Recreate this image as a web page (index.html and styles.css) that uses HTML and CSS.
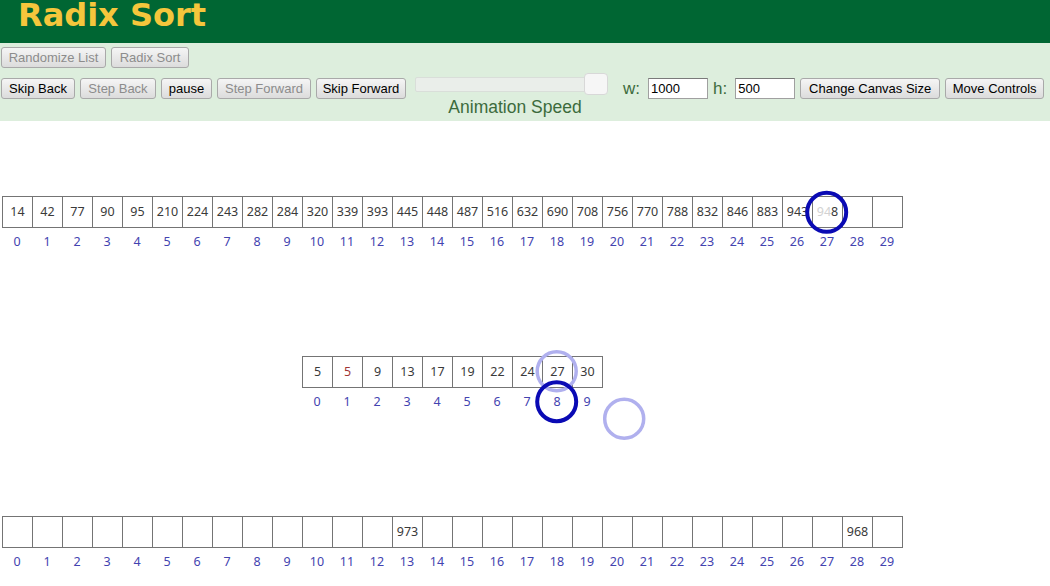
FILE: index.html
```html
<!DOCTYPE html>
<html>
<head>
<meta charset="utf-8">
<title>Radix Sort</title>
<link rel="stylesheet" href="styles.css">
</head>
<body>
<header class="header"><h1 class="title">Radix Sort</h1></header>
<div class="controls">
  <div class="row row1">
    <button class="btn off w-rand">Randomize List</button>
    <button class="btn off w-radix">Radix Sort</button>
  </div>
  <div class="row row2">
    <button class="btn w-skipb">Skip Back</button>
    <button class="btn off w-stepb">Step Back</button>
    <button class="btn w-pause">pause</button>
    <button class="btn off w-stepf">Step Forward</button>
    <button class="btn w-skipf">Skip Forward</button>
    <div class="speed">
      <div class="track"><span class="thumb"></span></div>
      <div class="speed-label">Animation Speed</div>
    </div>
    <span class="lbl lbl-w">w:</span>
    <input class="num" type="text" value="1000">
    <span class="lbl">h:</span>
    <input class="num" type="text" value="500">
    <button class="btn w-canvas">Change Canvas Size</button>
    <button class="btn w-move">Move Controls</button>
  </div>
</div>
<div class="canvas">
  <div class="arr arr-top">
    <div class="cells">
      <div class="cell">14</div><div class="cell">42</div><div class="cell">77</div><div class="cell">90</div><div class="cell">95</div>
      <div class="cell">210</div><div class="cell">224</div><div class="cell">243</div><div class="cell">282</div><div class="cell">284</div>
      <div class="cell">320</div><div class="cell">339</div><div class="cell">393</div><div class="cell">445</div><div class="cell">448</div>
      <div class="cell">487</div><div class="cell">516</div><div class="cell">632</div><div class="cell">690</div><div class="cell">708</div>
      <div class="cell">756</div><div class="cell">770</div><div class="cell">788</div><div class="cell">832</div><div class="cell">846</div>
      <div class="cell">883</div><div class="cell">943</div><div class="cell"><span class="faded">94</span>8</div><div class="cell"></div><div class="cell"></div>
    </div>
    <div class="idx">
      <span>0</span><span>1</span><span>2</span><span>3</span><span>4</span><span>5</span><span>6</span><span>7</span><span>8</span><span>9</span>
      <span>10</span><span>11</span><span>12</span><span>13</span><span>14</span><span>15</span><span>16</span><span>17</span><span>18</span><span>19</span>
      <span>20</span><span>21</span><span>22</span><span>23</span><span>24</span><span>25</span><span>26</span><span>27</span><span>28</span><span>29</span>
    </div>
  </div>
  <div class="arr arr-mid">
    <div class="cells">
      <div class="cell">5</div><div class="cell red">5</div><div class="cell">9</div><div class="cell">13</div><div class="cell">17</div>
      <div class="cell">19</div><div class="cell">22</div><div class="cell">24</div><div class="cell">27</div><div class="cell">30</div>
    </div>
    <div class="idx">
      <span>0</span><span>1</span><span>2</span><span>3</span><span>4</span><span>5</span><span>6</span><span>7</span><span>8</span><span>9</span>
    </div>
  </div>
  <div class="arr arr-bot">
    <div class="cells">
      <div class="cell"></div><div class="cell"></div><div class="cell"></div><div class="cell"></div><div class="cell"></div>
      <div class="cell"></div><div class="cell"></div><div class="cell"></div><div class="cell"></div><div class="cell"></div>
      <div class="cell"></div><div class="cell"></div><div class="cell"></div><div class="cell">973</div><div class="cell"></div>
      <div class="cell"></div><div class="cell"></div><div class="cell"></div><div class="cell"></div><div class="cell"></div>
      <div class="cell"></div><div class="cell"></div><div class="cell"></div><div class="cell"></div><div class="cell"></div>
      <div class="cell"></div><div class="cell"></div><div class="cell"></div><div class="cell">968</div><div class="cell"></div>
    </div>
    <div class="idx">
      <span>0</span><span>1</span><span>2</span><span>3</span><span>4</span><span>5</span><span>6</span><span>7</span><span>8</span><span>9</span>
      <span>10</span><span>11</span><span>12</span><span>13</span><span>14</span><span>15</span><span>16</span><span>17</span><span>18</span><span>19</span>
      <span>20</span><span>21</span><span>22</span><span>23</span><span>24</span><span>25</span><span>26</span><span>27</span><span>28</span><span>29</span>
    </div>
  </div>
  <svg class="overlay" width="1050" height="465" viewBox="0 0 1050 465">
    <circle cx="556.7" cy="250.3" r="19.5" fill="none" stroke="#b0b0ee" stroke-width="3.5"/>
    <circle cx="624.2" cy="297.8" r="19.5" fill="none" stroke="#b0b0ee" stroke-width="3.5"/>
    <circle cx="826.7" cy="91.3" r="19.5" fill="none" stroke="#0a0ab4" stroke-width="4"/>
    <circle cx="556.7" cy="280.7" r="19.5" fill="none" stroke="#0a0ab4" stroke-width="4"/>
  </svg>
</div>
</body>
</html>
```
FILE: styles.css
```css
html, body {
  margin: 0;
  padding: 0;
  background: #ffffff;
  font-family: "Liberation Sans", Arial, sans-serif;
}

.header {
  height: 43px;
  background: #006633;
}

.title {
  margin: 0 0 0 18px;
  padding-top: 2px;
  font-family: "DejaVu Sans", Verdana, sans-serif;
  font-weight: bold;
  font-size: 32px;
  line-height: 26px;
  color: #f5c63c;
}

.controls {
  height: 78px;
  background: #ddeedd;
  padding: 4px 0 0 1px;
  box-sizing: border-box;
}

.row {
  display: flex;
  align-items: flex-start;
  gap: 5px;
}

.row2 {
  margin-top: 10px;
}

.btn {
  box-sizing: border-box;
  height: 21px;
  padding: 0;
  margin: 0;
  font-family: "Liberation Sans", Arial, sans-serif;
  font-size: 13px;
  line-height: 19px;
  color: #000;
  text-align: center;
  background: linear-gradient(#f5f5f5, #dcdcdc);
  border: 1px solid #a9a9a9;
  border-radius: 3px;
}

.btn.off {
  color: #8c8c8c;
}

.w-rand { width: 105px; }
.w-radix { width: 78px; }
.w-skipb { width: 74px; }
.w-stepb { width: 76px; }
.w-pause { width: 51px; }
.w-stepf { width: 94px; }
.w-skipf { width: 90px; }
.w-canvas { width: 140px; }
.w-move { width: 99px; }

.speed {
  width: 193px;
  margin: -5px 0 0 4px;
}

.track {
  position: relative;
  box-sizing: border-box;
  height: 15px;
  margin-top: 4px;
  background: #eaeeea;
  border: 1px solid #d9ded9;
  border-radius: 2px;
}

.thumb {
  position: absolute;
  left: 168px;
  top: -5px;
  box-sizing: border-box;
  width: 24px;
  height: 22px;
  background: #f6f6f6;
  border: 1px solid #d8d8d8;
  border-radius: 4px;
}

.speed-label {
  margin-top: 5px;
  padding-left: 7px;
  text-align: center;
  font-size: 17.5px;
  line-height: 20px;
  color: #3c6b3c;
}

.lbl {
  font-size: 17px;
  line-height: 21px;
  color: #3c6b3c;
  margin-right: 3px;
}

.lbl-w {
  margin-left: 10px;
}

.num {
  box-sizing: border-box;
  width: 60px;
  height: 21px;
  margin: 0;
  padding: 0 2px;
  font-family: "Liberation Sans", Arial, sans-serif;
  font-size: 13px;
  color: #000;
  background: #fff;
  border: 1px solid #a0a0a0;
  border-top-color: #7a7a7a;
}

.canvas {
  position: relative;
  height: 465px;
  font-family: "Noto Sans", "Open Sans", sans-serif;
  font-size: 12.5px;
}

.arr-top {
  padding-top: 75px;
  margin-left: 2px;
}

.arr-mid {
  margin-top: 106px;
  margin-left: 302px;
}

.arr-bot {
  margin-top: 106px;
  margin-left: 2px;
}

.cells {
  display: flex;
}

.cell {
  box-sizing: border-box;
  width: 31px;
  height: 32px;
  margin-right: -1px;
  border: 1px solid #747474;
  line-height: 30px;
  text-align: center;
  color: #3a3a3a;
  white-space: nowrap;
}

.cell.red {
  color: #a03535;
}

.faded {
  color: #d2d2d2;
}

.idx {
  display: flex;
  margin-top: 6px;
}

.idx span {
  width: 30px;
  line-height: 16px;
  text-align: center;
  color: #4343b0;
}

.overlay {
  position: absolute;
  top: 0;
  left: 0;
  pointer-events: none;
}
```
